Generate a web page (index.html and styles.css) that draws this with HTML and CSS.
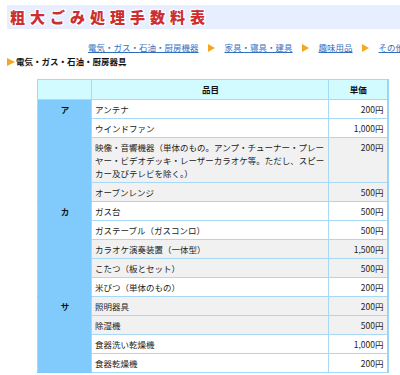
FILE: index.html
```html
<!DOCTYPE html>
<html lang="ja">
<head>
<meta charset="utf-8">
<title>粗大ごみ処理手数料表</title>
<link rel="stylesheet" href="styles.css">
</head>
<body>
<h1 class="title">粗大ごみ処理手数料表</h1>
<nav class="nav">
  <a class="nav-link" href="#">電気・ガス・石油・厨房機器</a>
  <span class="arrow"></span>
  <a class="nav-link" href="#">家具・寝具・建具</a>
  <span class="arrow"></span>
  <a class="nav-link" href="#">趣味用品</a>
  <span class="arrow"></span>
  <a class="nav-link" href="#">その他</a>
</nav>
<h2 class="heading"><span class="arrow arrow-head"></span>電気・ガス・石油・厨房器具</h2>
<table class="fees">
  <colgroup>
    <col class="col-kana">
    <col class="col-item">
    <col class="col-price">
  </colgroup>
  <thead>
    <tr><th class="kana-head"></th><th>品目</th><th>単価</th></tr>
  </thead>
  <tbody>
    <tr><td class="kana" rowspan="4">ア</td><td class="item">アンテナ</td><td class="price">200円</td></tr>
    <tr><td class="item">ウインドファン</td><td class="price">1,000円</td></tr>
    <tr class="gray"><td class="item">映像・音響機器（単体のもの。アンプ・チューナー・プレーヤー・ビデオデッキ・レーザーカラオケ等。ただし、スピーカー及びテレビを除く。）</td><td class="price">200円</td></tr>
    <tr class="gray"><td class="item">オーブンレンジ</td><td class="price">500円</td></tr>
    <tr><td class="kana" rowspan="5">カ</td><td class="item">ガス台</td><td class="price">500円</td></tr>
    <tr><td class="item">ガステーブル（ガスコンロ）</td><td class="price">500円</td></tr>
    <tr class="gray"><td class="item">カラオケ演奏装置（一体型）</td><td class="price">1,500円</td></tr>
    <tr class="gray"><td class="item">こたつ（板とセット）</td><td class="price">500円</td></tr>
    <tr><td class="item">米びつ（単体のもの）</td><td class="price">200円</td></tr>
    <tr class="gray"><td class="kana" rowspan="4">サ</td><td class="item">照明器具</td><td class="price">200円</td></tr>
    <tr class="gray"><td class="item">除湿機</td><td class="price">500円</td></tr>
    <tr><td class="item">食器洗い乾燥機</td><td class="price">1,000円</td></tr>
    <tr><td class="item">食器乾燥機</td><td class="price">200円</td></tr>
  </tbody>
</table>
</body>
</html>
```

FILE: styles.css
```css
html, body {
  margin: 0;
  padding: 0;
  overflow: hidden;
  background: #ffffff;
}

body {
  font-family: "Noto Sans CJK JP", "Noto Sans", sans-serif;
  font-size: 8.5px;
  color: #222222;
}

.title {
  margin: 5px 0 0 7px;
  height: 24px;
  padding-left: 3px;
  background: #e6eeff;
  font-size: 15px;
  line-height: 24px;
  letter-spacing: 5px;
  font-weight: 900;
  color: #cc2f2f;
  white-space: nowrap;
  text-shadow: 1px 0 0 #fff, -1px 0 0 #fff, 0 1px 0 #fff, 0 -1px 0 #fff,
    1px 1px 0 #fff, -1px -1px 0 #fff, 1px -1px 0 #fff, -1px 1px 0 #fff;
}

.nav {
  display: flex;
  align-items: center;
  margin-top: 12px;
  padding-left: 88px;
  height: 13px;
  line-height: 13px;
  white-space: nowrap;
  overflow: hidden;
}

.nav-link {
  color: #2f6fbf;
  text-decoration: underline;
  flex: none;
}

.arrow {
  flex: none;
  display: inline-block;
  width: 0;
  height: 0;
  border-left: 7px solid #f5a623;
  border-top: 4px solid transparent;
  border-bottom: 4px solid transparent;
  margin: 0 10px 0 9px;
}

.heading {
  display: flex;
  align-items: center;
  margin: 1px 0 0 7px;
  height: 13px;
  line-height: 13px;
  font-size: 8.5px;
  font-weight: bold;
  color: #111111;
}

.arrow-head {
  border-left-width: 8px;
  border-top-width: 4.5px;
  border-bottom-width: 4.5px;
  margin: 0 1px 0 0;
}

.fees {
  margin: 11px 0 0 37px;
  width: 350px;
  table-layout: fixed;
  border-collapse: collapse;
  border-left: 1px solid #9fd3f2;
  border-top: 1px solid #9fd3f2;
  border-right: 2px solid #9fd3f2;
  border-bottom: 1px solid #9fd3f2;
}

.col-kana { width: 54px; }
.col-item { width: 237px; }
.col-price { width: 59px; }

.fees th,
.fees td {
  border: 1px solid #a8d8f4;
  line-height: 13px;
  padding: 3px 2px 2px 3px;
}

.fees th {
  background: #d2fbff;
  font-weight: bold;
  text-align: center;
  padding-top: 3px;
  padding-bottom: 3px;
  color: #111111;
}

.fees td.kana {
  background: #80cbfb;
  border-top-color: #80cbfb;
  border-bottom-color: #80cbfb;
  font-weight: bold;
  text-align: center;
  vertical-align: top;
  color: #111111;
}

.fees td.price {
  text-align: right;
  vertical-align: top;
  padding-right: 3px;
}

.fees .gray td.item,
.fees .gray td.price {
  background: #f1f1f1;
}
```
